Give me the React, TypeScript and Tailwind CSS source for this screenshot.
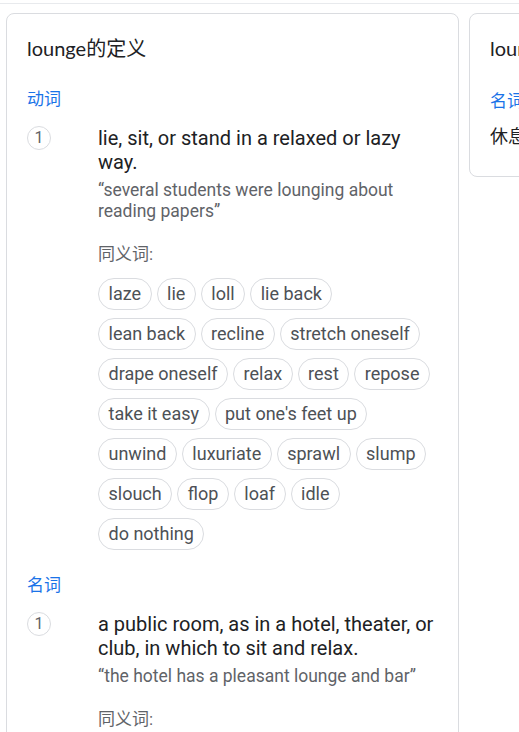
import React from "react";

const sans = "font-['Roboto','Noto_Sans_CJK_SC',sans-serif]";
const title = "font-['Lato','Noto_Sans_CJK_SC',sans-serif]";

const verbSynonyms: string[][] = [
  ["laze", "lie", "loll", "lie back"],
  ["lean back", "recline", "stretch oneself"],
  ["drape oneself", "relax", "rest", "repose"],
  ["take it easy", "put one's feet up"],
  ["unwind", "luxuriate", "sprawl", "slump"],
  ["slouch", "flop", "loaf", "idle"],
  ["do nothing"],
];

const Chip = ({ label }: { label: string }) => (
  <span className="h-8 px-[9.5px] flex items-center rounded-full border border-[#dadce0] text-[18px] text-[#4d5156] leading-none whitespace-nowrap">
    {label}
  </span>
);

const Sense = ({
  definition,
  example,
  synonyms,
}: {
  definition: string;
  example: string;
  synonyms?: string[][];
}) => (
  <div className="flex">
    <div className="w-6 h-6 shrink-0 rounded-full border border-[#dadce0] flex items-center justify-center text-[16px] text-[#5f6368] leading-none">
      1
    </div>
    <div className="ml-[47px] flex-1">
      <div className="text-[20px] leading-6 text-[#202124]">{definition}</div>
      <div className="mt-[6px] text-[17.5px] leading-[21px] text-[#5f6368]">{example}</div>
      <div className="mt-5 text-[17px] leading-6 text-[#5f6368]">同义词:</div>
      {synonyms && (
        <div className="mt-3 flex flex-col gap-2">
          {synonyms.map((row, i) => (
            <div key={i} className="flex flex-wrap gap-[5px]">
              {row.map((s) => (
                <Chip key={s} label={s} />
              ))}
            </div>
          ))}
        </div>
      )}
    </div>
  </div>
);

const App = () => {
  return (
    <div className={`w-[519px] h-[732px] overflow-hidden bg-white ${sans}`}>
      <div className="h-[4px] border-b border-[#e8eaed]" />
      <div className="flex gap-[10px] pl-[6px] pt-[9px]">
        <div className="w-[453px] shrink-0 border border-[#dadce0] rounded-lg pt-5 pl-[20px] pr-[20px] pb-8">
          <div className={`text-[20px] leading-7 text-[#202124] ${title}`}>lounge的定义</div>

          <div className="mt-[25px] text-[17px] leading-6 text-[#1a73e8]">动词</div>
          <div className="mt-[15px]">
            <Sense
              definition="lie, sit, or stand in a relaxed or lazy way."
              example="“several students were lounging about reading papers”"
              synonyms={verbSynonyms}
            />
          </div>

          <div className="mt-[23px] text-[17px] leading-6 text-[#1a73e8]">名词</div>
          <div className="mt-[15px]">
            <Sense
              definition="a public room, as in a hotel, theater, or club, in which to sit and relax."
              example="“the hotel has a pleasant lounge and bar”"
            />
          </div>
        </div>

        <div className="w-[453px] shrink-0 self-start h-[164px] border border-[#dadce0] rounded-lg pt-5 pl-[20px]">
          <div className={`text-[20px] leading-7 text-[#202124] ${title}`}>lounge的翻译</div>
          <div className="mt-[27px] text-[17px] leading-6 text-[#1a73e8]">名词</div>
          <div className="mt-3 text-[18px] leading-6 text-[#202124]">休息室</div>
        </div>
      </div>
    </div>
  );
};

export default App;
